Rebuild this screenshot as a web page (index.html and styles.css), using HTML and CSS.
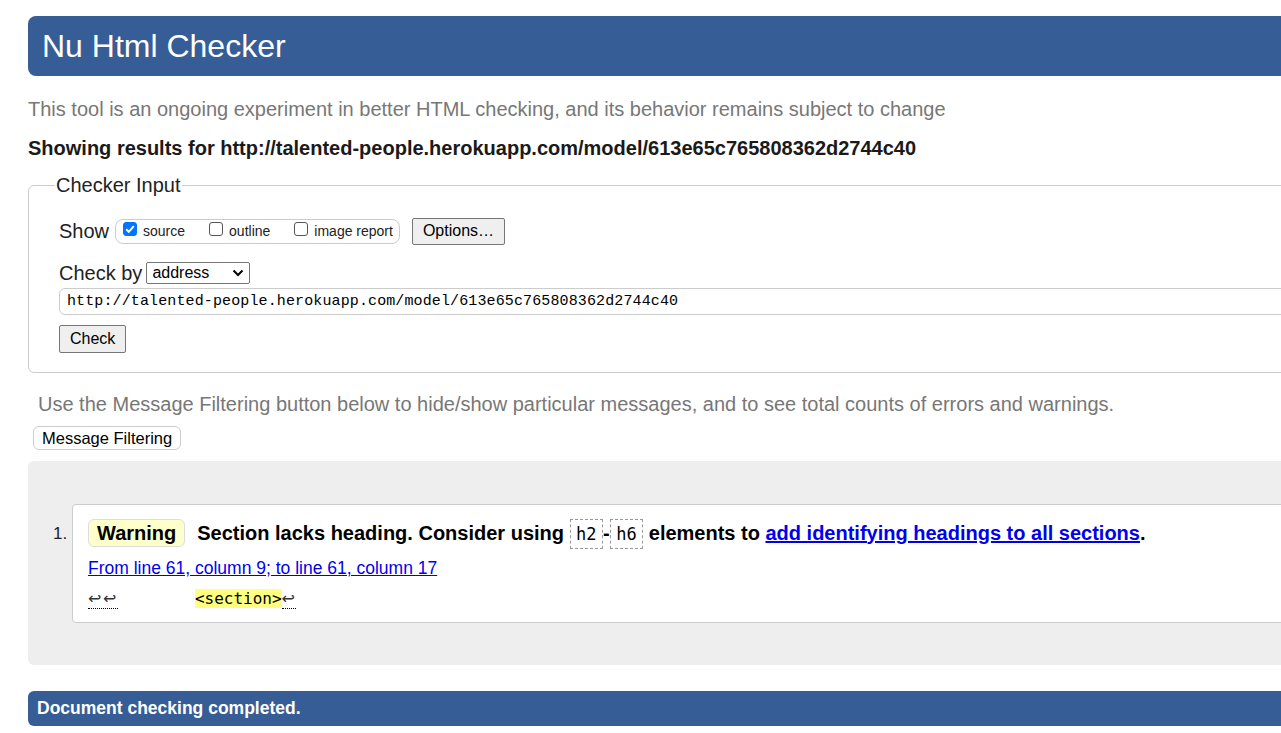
FILE: index.html
```html
<!DOCTYPE html>
<html lang="en">
<head>
<meta charset="utf-8">
<title>Nu Html Checker</title>
<link rel="stylesheet" href="styles.css">
</head>
<body>
<div class="page">
  <h1 class="title">Nu Html Checker</h1>
  <p class="intro">This tool is an ongoing experiment in better HTML checking, and its behavior remains subject to change</p>
  <p class="showing">Showing results for http://talented-people.herokuapp.com/model/613e65c765808362d2744c40</p>

  <fieldset class="input">
    <legend>Checker Input</legend>
    <div class="show-row">
      <span class="label">Show</span>
      <span class="checks">
        <label class="chk"><span class="box on"><svg width="14" height="14" viewBox="0 0 14 14"><path d="M3.2 7.2 L5.8 9.8 L10.8 4.2" fill="none" stroke="#fff" stroke-width="2"/></svg></span>source</label>
        <label class="chk"><span class="box"></span>outline</label>
        <label class="chk"><span class="box"></span>image report</label>
      </span>
      <button class="btn">Options…</button>
    </div>
    <div class="by-row">
      <span class="label">Check by</span>
      <span class="select">address<svg width="12" height="8" viewBox="0 0 12 8"><path d="M1.5 1.5 L6 6 L10.5 1.5" fill="none" stroke="#000" stroke-width="2"/></svg></span>
    </div>
    <div class="url">http://talented-people.herokuapp.com/model/613e65c765808362d2744c40</div>
    <button class="btn check">Check</button>
  </fieldset>

  <p class="filter-note">Use the Message Filtering button below to hide/show particular messages, and to see total counts of errors and warnings.</p>
  <button class="filter-btn">Message Filtering</button>

  <div class="results">
    <ol class="messages">
      <li class="msg">
        <span class="num">1.</span>
        <div class="msg-body">
          <p class="msg-line"><strong class="badge">Warning</strong><span class="msg-text">Section lacks heading. Consider using <code>h2</code>-<code>h6</code> elements to <a href="#">add identifying headings to all sections</a>.</span></p>
          <p class="loc"><a href="#">From line 61, column 9; to line 61, column 17</a></p>
          <p class="extract"><b class="lf">↩↩</b>        <mark>&lt;section&gt;</mark><b class="lf">↩</b></p>
        </div>
      </li>
    </ol>
  </div>

  <p class="done">Document checking completed.</p>
</div>
</body>
</html>
```

FILE: styles.css
```css
html, body {
  overflow: hidden;
}
body {
  margin: 0;
  font-family: "Liberation Sans", Arial, sans-serif;
  color: #000;
  background: #fff;
}
.page {
  width: 1400px;
  padding: 16px 0 0 28px;
}
.title {
  margin: 0;
  height: 60px;
  line-height: 60px;
  padding-left: 14px;
  background: #365d95;
  color: #fff;
  font-size: 32px;
  font-weight: normal;
  border-radius: 8px;
}
.intro {
  margin: 21px 0 0;
  font-size: 20px;
  line-height: 24px;
  color: #777;
}
.showing {
  margin: 15px 0 0;
  font-size: 20px;
  line-height: 24px;
  font-weight: bold;
  color: #1a1a1a;
}
.input {
  margin: 14px 0 0;
  padding: 19px 0 19px 30px;
  border: 1px solid #ccc;
  border-radius: 6px;
}
.input legend {
  font-size: 20px;
  padding: 0 1px;
  margin-left: -4px;
  color: #222;
}
.label {
  font-size: 20px;
  color: #222;
}
.show-row {
  display: flex;
  align-items: center;
  height: 30px;
}
.checks {
  display: flex;
  align-items: center;
  margin-left: 6px;
  height: 23px;
  border: 1px solid #ccc;
  border-radius: 8px;
  padding: 0 6px 0 7px;
  font-size: 14px;
  color: #222;
}
.chk {
  display: flex;
  align-items: center;
  margin-right: 24px;
}
.chk:last-child {
  margin-right: 0;
}
.box {
  width: 14px;
  height: 14px;
  box-sizing: border-box;
  border: 1px solid #555;
  border-radius: 3px;
  margin: -4px 6px 0 0;
  display: inline-flex;
  background: #fff;
}
.box.on {
  background: #0075ff;
  border-color: #0075ff;
}
.box svg {
  margin: -1px;
}
.btn {
  font-family: "Liberation Sans", Arial, sans-serif;
  font-size: 16px;
  background: #efefef;
  border: 1px solid #767676;
  border-radius: 2px;
  color: #000;
  height: 27px;
  padding: 0 10px;
  margin-left: 12px;
}
.by-row {
  display: flex;
  align-items: center;
  margin-top: 16px;
  height: 22px;
}
.select {
  margin-left: 4px;
  width: 104px;
  height: 22px;
  box-sizing: border-box;
  border: 1px solid #767676;
  border-radius: 2px;
  font-size: 16px;
  display: flex;
  align-items: center;
  justify-content: space-between;
  padding: 0 5px 0 5px;
}
.url {
  margin-top: 4px;
  height: 27px;
  box-sizing: border-box;
  border: 1px solid #ccc;
  border-radius: 6px;
  font-family: "Liberation Mono", "DejaVu Sans Mono", monospace;
  font-size: 15px;
  letter-spacing: 0.12px;
  line-height: 25px;
  padding-left: 7px;
  color: #000;
}
.check {
  margin: 10px 0 0;
  height: 28px;
  padding: 0 10px;
}
.filter-note {
  margin: 19px 0 0 10px;
  font-size: 20px;
  line-height: 24px;
  color: #777;
}
.filter-btn {
  margin: 10px 0 0 5px;
  height: 24px;
  padding: 0 8px;
  font-family: "Liberation Sans", Arial, sans-serif;
  font-size: 16.5px;
  background: #fff;
  border: 1px solid #ccc;
  border-radius: 6px;
  color: #000;
  display: block;
}
.results {
  margin-top: 11px;
  background: #eee;
  border-radius: 6px;
  padding: 43px 0 42px 44px;
}
.messages {
  margin: 0;
  padding: 0;
  list-style: none;
}
.msg {
  position: relative;
  background: #fff;
  border: 1px solid #ccc;
  border-radius: 4px;
  padding: 13px 0 13px 15px;
}
.num {
  position: absolute;
  left: -20px;
  top: 19px;
  font-size: 17px;
  color: #222;
}
.msg-body p {
  margin: 0;
}
.msg-line {
  display: flex;
  align-items: center;
  height: 30px;
  font-size: 20px;
  font-weight: bold;
}
.badge {
  background: #ffffcc;
  border: 1px solid #ddd;
  border-radius: 6px;
  padding: 0 8px;
  height: 26px;
  line-height: 26px;
  margin-right: 12px;
}
.msg-text code {
  font-family: "DejaVu Sans Mono", monospace;
  font-weight: normal;
  font-size: 17px;
  border: 1px dashed #999;
  padding: 4px 5.5px;
  margin: 0;
}
.msg-text a {
  color: #00e;
}
.loc {
  margin-top: 10px !important;
  font-size: 17.5px;
  line-height: 20px;
}
.loc a {
  color: #00e;
}
.extract {
  margin-top: 11px !important;
  font-family: "DejaVu Sans Mono", monospace;
  font-size: 16px;
  line-height: 20px;
  white-space: pre;
}
.lf {
  font-family: "DejaVu Sans", sans-serif;
  font-weight: normal;
  color: #333;
  letter-spacing: 1.5px;
  border-bottom: 1px dotted #000;
}
.extract mark {
  background: #ffff80;
  color: #000;
}
.done {
  margin: 26px 0 0;
  height: 35px;
  line-height: 35px;
  padding-left: 9px;
  background: #365d95;
  color: #fff;
  font-size: 17.5px;
  font-weight: bold;
  border-radius: 6px;
}
```
